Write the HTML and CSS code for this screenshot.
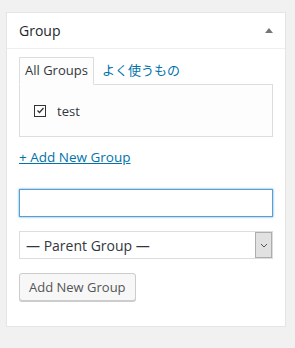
FILE: index.html
```html
<!doctype html>
<html>
<head>
  <title>Group</title>
  <meta charset="utf-8">
  <link rel="stylesheet" href="styles.css">
</head>
<body>
  <div class="postbox">
    <div class="hndle">
      <h2>Group</h2>
      <svg class="toggle" width="8" height="5" viewBox="0 0 8 5"><polygon points="0,5 4,0 8,5" fill="#72777c"/></svg>
    </div>
    <div class="inside">
      <ul class="tabs">
        <li class="tab active">All Groups</li>
        <li class="tab"><a href="#">よく使うもの</a></li>
      </ul>
      <div class="tab-panel">
        <label class="check-row">
          <span class="checkbox">
            <svg width="9" height="9" viewBox="0 0 9 9"><polyline points="1.5,4.5 3.5,6.5 7.5,2" fill="none" stroke="#333" stroke-width="1.3"/></svg>
          </span>
          <span>test</span>
        </label>
      </div>
      <a class="add-link" href="#">+ Add New Group</a>
      <input class="new-name" type="text">
      <div class="select-wrap">
        <select class="parent">
          <option>— Parent Group —</option>
        </select>
        <span class="select-arrow">
          <svg width="8" height="5" viewBox="0 0 8 5"><polyline points="1,1 4,4 7,1" fill="none" stroke="#555" stroke-width="1"/></svg>
        </span>
      </div>
      <div>
        <button class="button">Add New Group</button>
      </div>
    </div>
  </div>
</body>
</html>
```

FILE: styles.css
```css
body{
  margin:0;
  background:#f1f1f1;
  font-family:"Open Sans","Noto Sans CJK JP",sans-serif;
  font-size:13px;
  color:#32373c;
}
a{
  color:#0073aa;
}
.postbox{
  width:278px;
  margin:12px 0 0 6px;
  background:#fff;
  border:1px solid #e5e5e5;
  box-shadow:0 1px 1px rgba(0,0,0,.04);
}
.hndle{
  display:flex;
  justify-content:space-between;
  align-items:center;
  height:35px;
  padding:0 12px;
  border-bottom:1px solid #eee;
}
.hndle h2{
  margin:0;
  font-size:14px;
  font-weight:normal;
  color:#23282d;
}
.inside{
  display:flex;
  flex-direction:column;
  padding:8px 12px 25px;
}
.tabs{
  display:flex;
  margin:0 0 -1px;
  padding:0;
  list-style:none;
}
.tab{
  position:relative;
  padding:3px 5px 5px;
  line-height:18px;
  border:1px solid transparent;
  margin-right:2px;
}
.tab a{
  text-decoration:none;
}
.tab.active{
  border-color:#ddd;
  border-bottom-color:#fdfdfd;
  background:#fdfdfd;
  z-index:1;
}
.tab-panel{
  display:flex;
  align-items:center;
  height:51px;
  padding:0 14px;
  background:#fdfdfd;
  border:1px solid #ddd;
}
.check-row{
  display:flex;
  align-items:center;
  gap:11px;
}
.checkbox{
  display:flex;
  align-items:center;
  justify-content:center;
  width:10px;
  height:10px;
  border:1px solid #333;
  background:#fff;
}
.add-link{
  align-self:flex-start;
  margin-top:11px;
  line-height:18px;
  font-size:13.5px;
}
.new-name{
  box-sizing:border-box;
  height:28px;
  margin:23px 0 0;
  border:1px solid #5b9dd9;
  box-shadow:0 0 2px rgba(30,140,190,.8);
  outline:none;
}
.select-wrap{
  position:relative;
  margin-top:14px;
}
.parent{
  appearance:none;
  width:100%;
  height:28px;
  padding:0 6px;
  border:1px solid #ddd;
  background:#fff;
  font-family:inherit;
  font-size:14px;
  color:#32373c;
}
.select-arrow{
  position:absolute;
  top:1px;
  right:1px;
  display:flex;
  align-items:center;
  justify-content:center;
  box-sizing:border-box;
  width:17px;
  height:26px;
  background:#e1e1e1;
  border:1px solid #adadad;
}
.button{
  margin-top:14px;
  height:28px;
  padding:0 9px;
  background:#f7f7f7;
  border:1px solid #ccc;
  border-radius:3px;
  box-shadow:0 1px 0 #ccc;
  font-family:inherit;
  font-size:13px;
  color:#555;
}
```
